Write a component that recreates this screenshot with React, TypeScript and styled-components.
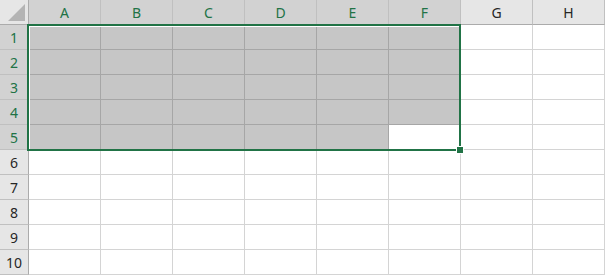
import React from 'react';
import styled, { createGlobalStyle } from 'styled-components';

const COLUMNS = ['A', 'B', 'C', 'D', 'E', 'F', 'G', 'H'];
const ROWS = [1, 2, 3, 4, 5, 6, 7, 8, 9, 10];

// selected range A1:F5, active cell F5
const isSelected = (col: number, row: number) =>
  col <= 5 && row <= 5 && !(col === 5 && row === 5);

const GlobalStyle = createGlobalStyle`
  html, body {
    margin: 0;
    padding: 0;
    background: #ffffff;
    overflow: hidden;
  }
  * {
    box-sizing: border-box;
  }
`;

const App = () => {
  return (
    <>
      <GlobalStyle />
      <Sheet>
        <Corner>
          <svg width="29" height="25" viewBox="0 0 29 25">
            <polygon points="8,21 25,21 25,4" fill="#b4b4b4" />
          </svg>
        </Corner>
        {COLUMNS.map((c, i) => (
          <ColHeader key={c} selected={i <= 5}>
            {c}
          </ColHeader>
        ))}
        {ROWS.map(r => (
          <React.Fragment key={r}>
            <RowHeader selected={r <= 5}>{r}</RowHeader>
            {COLUMNS.map((c, i) => (
              <Cell key={c} selected={isSelected(i, r)} />
            ))}
          </React.Fragment>
        ))}
        <SelectionBox />
        <FillHandle />
      </Sheet>
    </>
  );
};

const Sheet = styled.div`
  position: relative;
  display: grid;
  grid-template-columns: 29px repeat(8, 72px);
  grid-template-rows: 25px repeat(10, 25px);
  width: 605px;
  height: 275px;
  font-family: 'Noto Sans', 'Noto Sans CJK JP', sans-serif;
  font-size: 14px;
`;

const Corner = styled.div`
  background: #e6e6e6;
  border-right: 1px solid #ababab;
  border-bottom: 1px solid #ababab;

  svg {
    display: block;
  }
`;

const ColHeader = styled.div<{ selected: boolean }>`
  display: flex;
  align-items: center;
  justify-content: center;
  background: ${p => (p.selected ? '#d2d2d2' : '#e6e6e6')};
  color: ${p => (p.selected ? '#217346' : '#262626')};
  border-right: 1px solid #c0c0c0;
  border-bottom: 1px solid #ababab;
`;

const RowHeader = styled.div<{ selected: boolean }>`
  display: flex;
  align-items: center;
  justify-content: center;
  background: ${p => (p.selected ? '#d2d2d2' : '#e6e6e6')};
  color: ${p => (p.selected ? '#217346' : '#262626')};
  border-right: 1px solid #ababab;
  border-bottom: 1px solid #c0c0c0;
`;

const Cell = styled.div<{ selected: boolean }>`
  background: ${p => (p.selected ? '#c6c6c6' : '#ffffff')};
  border-right: 1px solid ${p => (p.selected ? '#a6a6a6' : '#d4d4d4')};
  border-bottom: 1px solid ${p => (p.selected ? '#a6a6a6' : '#d4d4d4')};
`;

const SelectionBox = styled.div`
  position: absolute;
  left: 27px;
  top: 24px;
  width: 434px;
  height: 127px;
  border: 2px solid #217346;
  box-shadow: inset 1px 1px 0 #ffffff;
  pointer-events: none;
`;

const FillHandle = styled.div`
  position: absolute;
  left: 456px;
  top: 146px;
  width: 8px;
  height: 8px;
  background: #217346;
  border: 1px solid #ffffff;
`;

export default App;
